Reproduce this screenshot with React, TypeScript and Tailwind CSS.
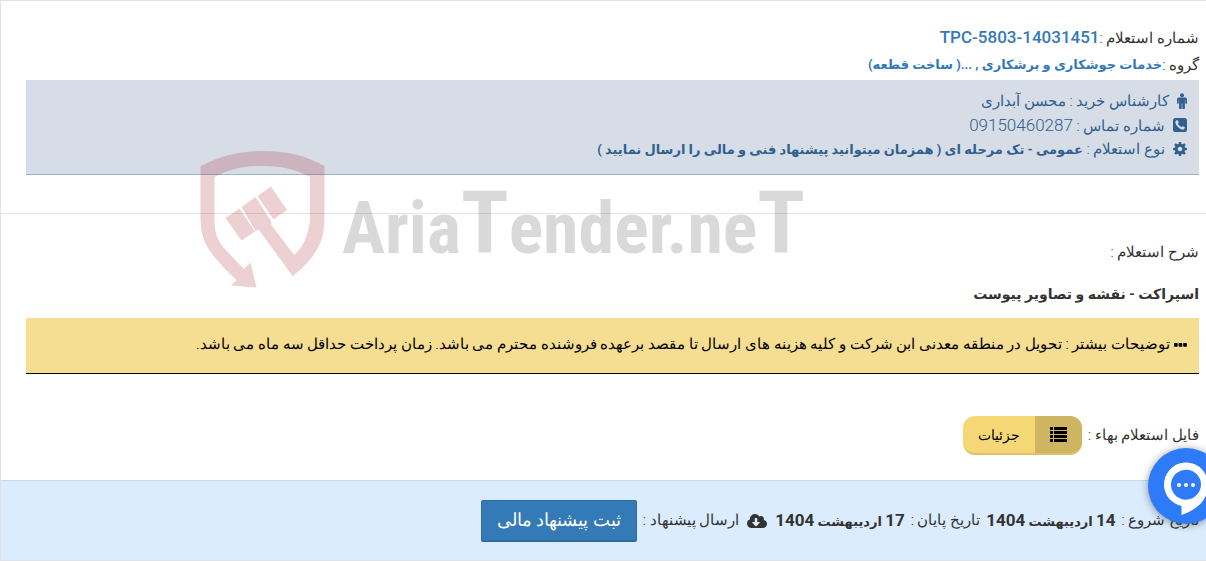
import type { ReactNode } from "react";
import { FaCloudDownloadAlt } from "react-icons/fa";

function PersonIcon() {
  return (
    <svg viewBox="0 0 10 16" className="h-4 w-2.5 shrink-0" aria-hidden="true" fill="currentColor">
      <circle cx="5" cy="2.2" r="2" />
      <path d="M1.8 4.600H8.200A1.800 1.800 0 0 1 10 6.400V10A0.850 0.850 0 0 1 8.300 10V7H7.900V15A1 1 0 0 1 5.300 15V10.500H4.700V15A1 1 0 0 1 2.100 15V7H1.700V10A0.850 0.850 0 0 1 0 10V6.400A1.800 1.800 0 0 1 1.800 4.600Z" />
    </svg>
  );
}

function GearIcon() {
  return (
    <svg viewBox="0 0 14 14" className="size-3.5 shrink-0" aria-hidden="true">
      <g fill="currentColor">
        {[0, 45, 90, 135].map((angle) => (
          <path key={angle} transform={`rotate(${angle} 7 7)`} d="M5.900 0H8.100L8.600 3V11L8.100 14H5.900L5.400 11V3Z" />
        ))}
      </g>
      <circle cx="7" cy="7" r="3.700" fill="none" stroke="currentColor" strokeWidth="3" />
      <circle cx="7" cy="7" r="2.300" fill="#d6dde6" />
    </svg>
  );
}

function PhoneSquareIcon() {
  return (
    <svg viewBox="0 0 14 14" className="size-3.5 shrink-0" aria-hidden="true">
      <rect width="14" height="14" rx="2.6" fill="currentColor" />
      <path
        d="M3.8 2.3C4.4 2 4.8 2.2 5 2.7L5.7 4.2C5.9 4.6 5.1 5.1 4.9 5.5C5.4 6.8 7 8.5 8.4 9.1C8.9 8.9 9.4 8 9.8 8.2L11.5 9.1C12.1 9.5 11.7 10.5 11.2 11C9.7 12.3 7.3 11.1 5.5 9.4C3.5 7.6 1.9 5.3 2.4 3.5C2.6 3 3.2 2.5 3.8 2.3Z"
        fill="#d6dde6"
      />
    </svg>
  );
}

function ListIcon() {
  return (
    <svg viewBox="0 0 17 15" className="h-[15px] w-[17px]" aria-hidden="true" fill="currentColor">
      {[0, 4, 8, 12].map((y) => (
        <g key={y}>
          <rect x="0" y={y} width="3" height="3" />
          <rect x="4" y={y} width="13" height="3" />
        </g>
      ))}
    </svg>
  );
}

function DotsIcon() {
  return (
    <svg viewBox="0 0 13 4" className="h-1 w-[13px] shrink-0" aria-hidden="true" fill="currentColor">
      <rect x="0" width="3.7" height="3.7" rx="0.8" />
      <rect x="4.6" width="3.7" height="3.7" rx="0.8" />
      <rect x="9.2" width="3.7" height="3.7" rx="0.8" />
    </svg>
  );
}

function Watermark() {
  return (
    <div
      dir="ltr"
      aria-hidden="true"
      className="pointer-events-none absolute top-[149px] left-[199px] flex items-start gap-4"
    >
      <svg viewBox="0 0 126 138" className="h-[138px] w-[126px] shrink-0" fill="#a5141e" fillOpacity="0.2">
        <path d="M0.5 16C20 6 38 1 63 1S106 6 124.500 16V68C124.500 86 120 98 108 112Q101 120 92.500 126L59 80L55.500 81L41.500 57L55.500 47L71 71L71.500 75L94 105C103 97 107 87 109 77Q110 73 110 67V27C96 19 80 16 62 16S30 19 14.500 27V72C15 86 19 93 26 100Q34 109 44 119L50.500 112.500L56.500 137.500L31 135.500L36.500 130C25 119 15 109 8 98Q0.500 86 0.500 70Z" />
        <path d="M25.500 68L39.500 58.500L55 81.500L41.500 90.500Z" />
        <path d="M57.500 46L71 36.500L87 60L73.500 69.500Z" />
      </svg>
      <div className="mt-7 font-['Roboto_Condensed',Roboto,sans-serif] text-[72px] leading-[90px] font-bold whitespace-nowrap text-black/15">
        Aria<span className="text-[88px]">T</span>ender.ne<span className="text-[88px]">T</span>
      </div>
    </div>
  );
}

function InfoRow({ icon, children }: { icon: ReactNode; children: ReactNode }) {
  return (
    <li className="flex h-6 items-center gap-2">
      {icon}
      <span>{children}</span>
    </li>
  );
}

function ChatButton() {
  return (
    <button
      type="button"
      aria-label="گفتگو"
      className="absolute -right-[18px] bottom-9 size-[76px] rounded-full bg-[#2d7bf9] text-white shadow-[0_1px_8px_rgba(0,0,0,0.4)]"
    >
      <svg viewBox="0 0 76 76" className="size-full" aria-hidden="true">
        <path
          fill="#fff"
          fillRule="evenodd"
          d="M33.500 58A22 22 0 1 1 60 36.500C60 53 48 62 33.500 67ZM33.500 51A15 15 0 1 1 53 36.500C53 46 44 54 33.500 51Z"
        />
        <circle cx="31" cy="37" r="2" fill="#fff" />
        <circle cx="38" cy="37" r="2" fill="#fff" />
        <circle cx="45" cy="37" r="2" fill="#fff" />
      </svg>
    </button>
  );
}

function DateValue({ day, month, year }: { day: string; month: string; year: string }) {
  return (
    <strong className="text-[13px] font-bold">
      <span className="text-[17px]">{day}</span> {month} <span className="text-[17px]">{year}</span>
    </strong>
  );
}

export default function App() {
  return (
    <main
      dir="rtl"
      lang="fa"
      className="relative overflow-hidden border-t border-b border-l border-[#dee2e6] bg-white font-[Roboto,'DejaVu_Sans',sans-serif] text-[15px] font-light text-[#333]"
    >
      <section className="border-b border-[#e5e5e5] pt-[23px] pr-[7px] pb-[38px] pl-[25px]">
        <p className="flex h-7 items-center">
          <span>شماره استعلام :</span>
          <a href="#inquiry" className="text-[17px] font-medium text-[#337ab7]">
            <bdi dir="ltr">TPC-5803-14031451</bdi>
          </a>
        </p>
        <p className="mb-0.5 flex h-[26px] items-center">
          <span>گروه :</span>
          <a href="#group" className="text-[13px] font-bold text-[#337ab7]">
            خدمات جوشکاری و برشکاری , ...( ساخت قطعه)
          </a>
        </p>
        <ul className="border-b border-[#9bb3cc] bg-[#d6dde6] px-3 pt-[9px] pb-[13px] text-[#31608f]">
          <InfoRow icon={<PersonIcon />}>کارشناس خرید : محسن آبداری</InfoRow>
          <InfoRow icon={<PhoneSquareIcon />}>
            شماره تماس : <span className="text-[17px] leading-6">09150460287</span>
          </InfoRow>
          <InfoRow icon={<GearIcon />}>
            نوع استعلام :{" "}
            <strong className="text-[13px] font-bold">
              عمومی - تک مرحله ای ( همزمان میتوانید پیشنهاد فنی و مالی را ارسال نمایید )
            </strong>
          </InfoRow>
        </ul>
      </section>

      <section className="pt-6 pr-[7px] pb-[25px] pl-[25px]">
        <p className="h-7 leading-7">شرح استعلام :</p>
        <h1 className="mt-3 h-10 text-sm leading-8 font-bold">اسپراکت - نقشه و تصاویر پیوست</h1>
        <p className="flex h-14 items-center gap-1 border-b border-black bg-[#f5dd91] px-3 pb-0.5 text-black">
          <DotsIcon />
          <span>
            توضیحات بیشتر : تحویل در منطقه معدنی ابن شرکت و کلیه هزینه های ارسال تا مقصد برعهده فروشنده محترم می باشد.
            زمان پرداخت حداقل سه ماه می باشد.
          </span>
        </p>
        <div className="mt-[42px] flex items-center gap-1.5">
          <span>فایل استعلام بهاء :</span>
          <button
            type="button"
            className="flex h-[39px] overflow-hidden rounded-xl border-b-2 border-black/10 bg-[#f5d775] text-sm text-black"
          >
            <span className="flex h-full w-[47px] items-center justify-center bg-[#ceb562]">
              <ListIcon />
            </span>
            <span className="flex h-full w-[72px] items-center justify-center">جزئیات</span>
          </button>
        </div>
      </section>

      <footer className="flex h-20 items-center gap-1.5 border-t border-[#c5daec] bg-[#daecfe] pr-[7px]">
        <span>تاریخ شروع :</span>
        <DateValue day="14" month="اردیبهشت" year="1404" />
        <span>تاریخ پایان :</span>
        <DateValue day="17" month="اردیبهشت" year="1404" />
        <FaCloudDownloadAlt className="mx-0.5 h-4 w-5" />
        <span>ارسال پیشنهاد :</span>
        <button
          type="button"
          className="h-[42px] rounded-xs border border-b-2 border-[#2e6da4] bg-[#337ab7] px-[15px] text-lg text-white"
        >
          ثبت پیشنهاد مالی
        </button>
      </footer>

      <Watermark />
      <ChatButton />
    </main>
  );
}
